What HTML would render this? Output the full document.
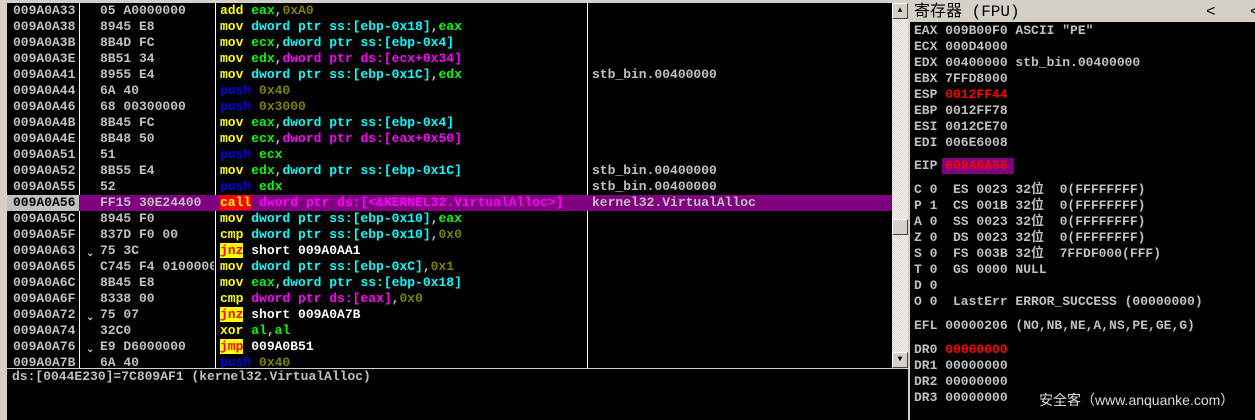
<!DOCTYPE html>
<html><head><meta charset="utf-8"><style>
*{margin:0;padding:0;box-sizing:border-box}
body{width:1255px;height:420px;background:#d4d0c8;position:relative;overflow:hidden;font-family:"Liberation Mono","Noto Sans CJK SC",monospace;font-size:13px;font-weight:bold;color:#c0c0c0}
.a{position:absolute;white-space:pre;line-height:16px}
#dis{position:absolute;left:7px;top:3px;width:885px;height:365px;background:#000;overflow:hidden}
.vl{position:absolute;top:0;width:1px;height:365px;background:#fff}
.y{color:#ff0}.c{color:#0ff}.g{color:#0f0}.m{color:#f0f}.o{color:#808000}.b{color:#00f}.w{color:#fff}
.jz{background:#ff0;color:#f00}.cl{background:#f00;color:#ff0}
#info{position:absolute;left:7px;top:369px;width:901px;height:51px;background:#000}
#sb{position:absolute;left:892px;top:3px;width:16px;height:365px;background:repeating-conic-gradient(#fff 0 25%,#d4d0c8 0 50%) 0 0/2px 2px}
.btn{position:absolute;left:0;width:16px;height:16px;background:#d4d0c8;border:1px solid;border-color:#fff #404040 #404040 #fff;font-size:8px;color:#000;text-align:center;line-height:14px}
#reg{position:absolute;left:910px;top:3px;width:345px;height:417px;background:#000}
#hd{position:absolute;left:0;top:0;width:345px;height:19px;background:#d4d0c8;color:#000;font-weight:normal;font-family:"Liberation Mono","Noto Sans CJK SC",monospace;font-size:16px;padding-left:4px;line-height:19px}
.r{color:#f00}
</style></head><body>
<div id="dis">
<div class="vl" style="left:72px"></div>
<div class="vl" style="left:208px"></div>
<div class="vl" style="left:580px"></div>
<div style="position:absolute;left:0;top:192px;width:885px;height:16px;background:#800080"></div>
<div style="position:absolute;left:0;top:192px;width:72px;height:16px;background:#c0c0c0"></div>
<div class="a" style="left:6px;top:0">009A0A33
009A0A38
009A0A3B
009A0A3E
009A0A41
009A0A44
009A0A46
009A0A4B
009A0A4E
009A0A51
009A0A52
009A0A55
<span style="color:#000">009A0A56</span>
009A0A5C
009A0A5F
009A0A63
009A0A65
009A0A6C
009A0A6F
009A0A72
009A0A74
009A0A76
009A0A7B</div>
<div class="a" style="left:93px;top:0;width:114px;overflow:hidden">05 A0000000
8945 E8
8B4D FC
8B51 34
8955 E4
6A 40
68 00300000
8B45 FC
8B48 50
51
8B55 E4
52
FF15 30E24400
8945 F0
837D F0 00
75 3C
C745 F4 01000000
8B45 E8
8338 00
75 07
32C0
E9 D6000000
6A 40</div>
<div class="a" style="left:79px;top:244px;font-size:10px">⌄</div>
<div class="a" style="left:79px;top:308px;font-size:10px">⌄</div>
<div class="a" style="left:79px;top:340px;font-size:10px">⌄</div>
<div class="a" style="left:213px;top:0"><span class="y">add</span> <span class="g">eax</span>,<span class="o">0xA0</span>
<span class="y">mov</span> <span class="c">dword ptr ss:[ebp-0x18]</span>,<span class="g">eax</span>
<span class="y">mov</span> <span class="g">ecx</span>,<span class="c">dword ptr ss:[ebp-0x4]</span>
<span class="y">mov</span> <span class="g">edx</span>,<span class="m">dword ptr ds:[ecx+0x34]</span>
<span class="y">mov</span> <span class="c">dword ptr ss:[ebp-0x1C]</span>,<span class="g">edx</span>
<span class="b">push</span> <span class="o">0x40</span>
<span class="b">push</span> <span class="o">0x3000</span>
<span class="y">mov</span> <span class="g">eax</span>,<span class="c">dword ptr ss:[ebp-0x4]</span>
<span class="y">mov</span> <span class="g">ecx</span>,<span class="m">dword ptr ds:[eax+0x50]</span>
<span class="b">push</span> <span class="g">ecx</span>
<span class="y">mov</span> <span class="g">edx</span>,<span class="c">dword ptr ss:[ebp-0x1C]</span>
<span class="b">push</span> <span class="g">edx</span>
<span class="cl">call</span> <span class="m">dword ptr ds:[&lt;&amp;KERNEL32.VirtualAlloc&gt;]</span>
<span class="y">mov</span> <span class="c">dword ptr ss:[ebp-0x10]</span>,<span class="g">eax</span>
<span class="y">cmp</span> <span class="c">dword ptr ss:[ebp-0x10]</span>,<span class="o">0x0</span>
<span class="jz">jnz</span> <span class="w">short 009A0AA1</span>
<span class="y">mov</span> <span class="c">dword ptr ss:[ebp-0xC]</span>,<span class="o">0x1</span>
<span class="y">mov</span> <span class="g">eax</span>,<span class="c">dword ptr ss:[ebp-0x18]</span>
<span class="y">cmp</span> <span class="m">dword ptr ds:[eax]</span>,<span class="o">0x0</span>
<span class="jz">jnz</span> <span class="w">short 009A0A7B</span>
<span class="y">xor</span> <span class="g">al</span>,<span class="g">al</span>
<span class="jz">jmp</span> <span class="w">009A0B51</span>
<span class="b">push</span> <span class="o">0x40</span></div>
<div class="a" style="left:585px;top:64px">stb_bin.00400000</div>
<div class="a" style="left:585px;top:160px">stb_bin.00400000
stb_bin.00400000
kernel32.VirtualAlloc</div>
</div>
<div id="sb"><div class="btn" style="top:0">▲</div><div class="btn" style="top:216px"></div><div class="btn" style="top:349px">▼</div></div>
<div id="info"><div class="a" style="left:5px;top:0">ds:[0044E230]=7C809AF1 (kernel32.VirtualAlloc)</div></div>
<div id="reg">
<div id="hd">寄存器 (FPU)<span style="position:absolute;left:296px">&lt;</span><span style="position:absolute;left:340px">&lt;</span></div>
<div class="a" style="left:4px;top:20px">EAX 009B00F0 ASCII "PE"
ECX 000D4000
EDX 00400000 stb_bin.00400000
EBX 7FFD8000
ESP <span class="r">0012FF44</span>
EBP 0012FF78
ESI 0012CE70
EDI 006E6008</div>
<div style="position:absolute;left:32px;top:155px;width:72px;height:16px;background:#800080"></div>
<div class="a" style="left:4px;top:155px">EIP <span class="r">009A0A56</span></div>
<div class="a" style="left:4px;top:179px">C 0  ES 0023 32位  0(FFFFFFFF)
P 1  CS 001B 32位  0(FFFFFFFF)
A 0  SS 0023 32位  0(FFFFFFFF)
Z 0  DS 0023 32位  0(FFFFFFFF)
S 0  FS 003B 32位  7FFDF000(FFF)
T 0  GS 0000 NULL
D 0
O 0  LastErr ERROR_SUCCESS (00000000)</div>
<div class="a" style="left:4px;top:315px">EFL 00000206 (NO,NB,NE,A,NS,PE,GE,G)</div>
<div class="a" style="left:4px;top:339px">DR0 <span class="r">00000000</span>
DR1 00000000
DR2 00000000
DR3 00000000</div>
<div class="a" style="left:129px;top:389px;font-family:'Liberation Sans','Noto Sans CJK SC',sans-serif;font-weight:normal;font-size:14px;color:#ddd">安全客（www.anquanke.com）</div>
</div>
</body></html>
